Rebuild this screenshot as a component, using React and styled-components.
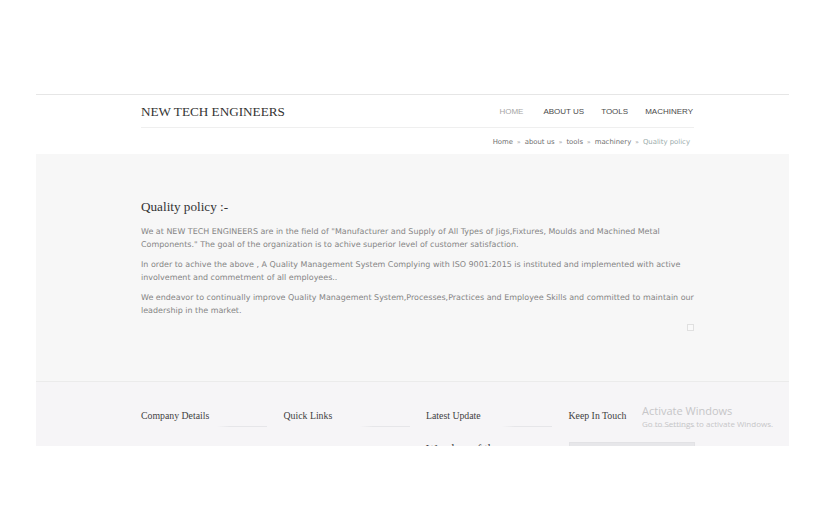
import React from "react";
import styled, { createGlobalStyle } from "styled-components";

const Global = createGlobalStyle`
  html, body { margin: 0; padding: 0; background: #ffffff; }
  body { width: 825px; height: 525px; overflow: hidden; font-family: "DejaVu Sans", Verdana, sans-serif; }
  * { box-sizing: border-box; }
`;

const Site = styled.div`
  margin: 94px 36px 0;
  height: 352px;
  overflow: hidden;
  border-top: 1px solid #e6e6e6;
`;

const Container = styled.div`
  width: 553px;
  margin-left: 105px;
`;

const Header = styled.header`
  background: #ffffff;
  height: 59px;
`;

const TopRow = styled.div`
  height: 33px;
  display: flex;
  align-items: center;
  justify-content: space-between;
  border-bottom: 1px solid #efefef;
`;

const Logo = styled.div`
  font-family: "Liberation Serif", "Times New Roman", serif;
  font-size: 13.2px;
  color: #333333;
  padding-top: 1px;
`;

const Nav = styled.nav`
  display: flex;
  align-items: center;
  gap: 17px;
  padding-right: 1px;
`;

const NavItem = styled.a`
  font-family: "Liberation Sans", Arial, sans-serif;
  font-size: 8px;
  color: ${(p) => (p.$active ? "#a6a6a6" : "#4a4a4a")};
  text-decoration: none;
  margin-right: ${(p) => (p.$first ? "3px" : "0")};
`;

const Crumbs = styled.div`
  height: 26px;
  display: flex;
  align-items: center;
  justify-content: flex-end;
  padding-right: 4px;
  padding-top: 1px;
  font-family: "DejaVu Sans", Verdana, sans-serif;
  font-size: 6.9px;
  color: #707070;
`;

const Crumb = styled.span`
  color: ${(p) => (p.$current ? "#9aabab" : "#707070")};
`;

const Sep = styled.span`
  margin: 0 4px;
  font-size: 6px;
  color: #8a8a8a;
`;

const Main = styled.main`
  background: #f7f7f7;
  height: 228px;
  border-bottom: 1px solid #ebebeb;
  padding-top: 45px;
`;

const Title = styled.h1`
  margin: 0 0 10px;
  font-family: "Liberation Serif", "Times New Roman", serif;
  font-weight: normal;
  font-size: 13.2px;
  line-height: 16px;
  color: #333333;
`;

const Para = styled.p`
  margin: 0 0 7px;
  font-family: "DejaVu Sans", Verdana, sans-serif;
  font-size: 7.98px;
  line-height: 13px;
  color: #858585;
  width: 556px;
`;

const BoxRow = styled.div`
  display: flex;
  justify-content: flex-end;
  padding-right: 0;
  margin-top: 7px;
`;

const TinyBox = styled.span`
  width: 7px;
  height: 7px;
  border: 1px solid #e0e0e0;
  background: #f9f9f9;
`;

const Footer = styled.footer`
  background: #f6f5f7;
  height: 64px;
  padding-top: 27px;
  position: relative;
`;

const Cols = styled.div`
  display: grid;
  grid-template-columns: repeat(4, 126px);
  column-gap: 16.5px;
`;

const Col = styled.div`
  display: flex;
  flex-direction: column;
`;

const ColHead = styled.h3`
  margin: 0;
  font-family: "Liberation Serif", "Times New Roman", serif;
  font-weight: normal;
  font-size: 9.8px;
  line-height: 13px;
  color: #3f3f3f;
  padding-bottom: 4px;
  border-bottom: 1px solid transparent;
  border-image: linear-gradient(to right, rgba(232,232,234,0) 0%, rgba(232,232,234,0) 60%, #e6e6e9 70%, #e6e6e9 100%) 1;
`;

const ColText = styled.div`
  margin-top: 15px;
  font-family: "Liberation Serif", "Times New Roman", serif;
  font-size: 12px;
  color: #444;
  line-height: 14px;
`;

const InputBox = styled.div`
  margin-top: 15px;
  height: 20px;
  background: #e7e7ea;
  border: 1px solid #e2e2e5;
`;

const Watermark = styled.div`
  position: absolute;
  left: 606px;
  top: 22px;
  font-family: "Open Sans", "Noto Sans", sans-serif;
  color: #c6c6c8;
  pointer-events: none;
`;

const WmTitle = styled.div`
  font-size: 11px;
  line-height: 14px;
`;

const WmSub = styled.div`
  font-size: 8px;
  line-height: 11px;
`;

export default function App() {
  return (
    <>
      <Global />
      <Site>
        <Header>
          <Container>
            <TopRow>
              <Logo>NEW TECH ENGINEERS</Logo>
              <Nav>
                <NavItem $active $first>HOME</NavItem>
                <NavItem>ABOUT US</NavItem>
                <NavItem>TOOLS</NavItem>
                <NavItem>MACHINERY</NavItem>
              </Nav>
            </TopRow>
            <Crumbs>
              <Crumb>Home</Crumb>
              <Sep>»</Sep>
              <Crumb>about us</Crumb>
              <Sep>»</Sep>
              <Crumb>tools</Crumb>
              <Sep>»</Sep>
              <Crumb>machinery</Crumb>
              <Sep>»</Sep>
              <Crumb $current>Quality policy</Crumb>
            </Crumbs>
          </Container>
        </Header>
        <Main>
          <Container>
            <Title>Quality policy :-</Title>
            <Para>
              We at NEW TECH ENGINEERS are in the field of "Manufacturer and Supply of All Types of Jigs,Fixtures, Moulds and Machined Metal Components." The goal of the organization is to achive superior level of customer satisfaction.
            </Para>
            <Para>
              In order to achive the above , A Quality Management System Complying with ISO 9001:2015 is instituted and implemented with active involvement and commetment of all employees..
            </Para>
            <Para>
              We endeavor to continually improve Quality Management System,Processes,Practices and Employee Skills and committed to maintain our leadership in the market.
            </Para>
            <BoxRow>
              <TinyBox />
            </BoxRow>
          </Container>
        </Main>
        <Footer>
          <Container>
            <Cols>
              <Col>
                <ColHead>Company Details</ColHead>
              </Col>
              <Col>
                <ColHead>Quick Links</ColHead>
              </Col>
              <Col>
                <ColHead>Latest Update</ColHead>
                <ColText>Wonders of the</ColText>
              </Col>
              <Col>
                <ColHead>Keep In Touch</ColHead>
                <InputBox />
              </Col>
            </Cols>
          </Container>
          <Watermark>
            <WmTitle>Activate Windows</WmTitle>
            <WmSub>Go to Settings to activate Windows.</WmSub>
          </Watermark>
        </Footer>
      </Site>
    </>
  );
}
